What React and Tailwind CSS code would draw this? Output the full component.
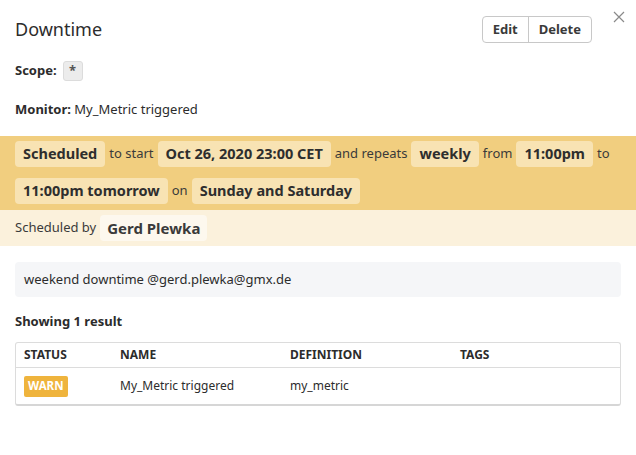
import React from "react";

const font = { fontFamily: '"Noto Sans", "Open Sans", sans-serif' };

function Chip({ children }) {
  return (
    <span className="rounded-[4px] bg-[#f8e3b3] px-[8px] h-[26px] flex items-center text-[14.5px] font-bold text-[#2e2e2e]">
      {children}
    </span>
  );
}

function Word({ children }) {
  return <span className="text-[13px] text-[#3a3a3a]">{children}</span>;
}

export default function App() {
  return (
    <div className="relative w-[636px] h-[455px] bg-white text-[#333]" style={font}>
      <button className="absolute right-[11px] top-[11px] text-[#8a8a8a]">
        <svg width="12" height="12" viewBox="0 0 12 12" fill="none" stroke="currentColor" strokeWidth="1.2">
          <path d="M1 1l10 10M11 1L1 11" />
        </svg>
      </button>

      <div className="px-[15px] pt-[16px] flex items-center justify-between pr-[44px]">
        <h1 className="text-[18px] leading-[27px] text-[#2c2c2c]">Downtime</h1>
        <div className="flex h-[27px] border border-[#c8c8c8] rounded-[4px] text-[13px] font-bold text-[#3a3a3a]">
          <button className="px-[10px] border-r border-[#c8c8c8]">Edit</button>
          <button className="px-[10px]">Delete</button>
        </div>
      </div>

      <div className="px-[15px] mt-[18px] flex items-center gap-[6px] h-[20px] text-[13px]">
        <span className="font-bold text-[#2c2c2c]">Scope:</span>
        <span className="h-[20px] w-[20px] flex items-center justify-center rounded-[3px] border border-[#dcdcdc] bg-[#ececec] font-bold text-[#555]">*</span>
      </div>

      <div className="px-[15px] mt-[18px] text-[13px] leading-[20px] text-[#2c2c2c]">
        <span className="font-bold">Monitor:</span> My_Metric triggered
      </div>

      <div className="mt-[17px] bg-[#f1ce7f] pl-[15px] pr-[15px] pt-[5px] pb-[6px] flex flex-wrap items-center gap-x-[4px] gap-y-[11px]">
        <Chip>Scheduled</Chip>
        <Word>to start</Word>
        <Chip>Oct 26, 2020 23:00 CET</Chip>
        <Word>and repeats</Word>
        <Chip>weekly</Chip>
        <Word>from</Word>
        <Chip>11:00pm</Chip>
        <Word>to</Word>
        <Chip>11:00pm tomorrow</Chip>
        <Word>on</Word>
        <Chip>Sunday and Saturday</Chip>
      </div>

      <div className="bg-[#fbf1dc] px-[15px] h-[36px] flex items-center gap-[4px]">
        <span className="text-[13px] text-[#3a3a3a]">Scheduled by</span>
        <span className="rounded-[4px] bg-[#fdf8ee] px-[7px] h-[26px] flex items-center text-[15px] font-bold text-[#3a3a3a]">
          Gerd Plewka
        </span>
      </div>

      <div className="mx-[15px] mt-[16px] h-[35px] rounded-[4px] bg-[#f5f6f8] px-[9px] flex items-center text-[13px] text-[#2c2c2c]">
        weekend downtime @gerd.plewka@gmx.de
      </div>

      <div className="px-[15px] mt-[14px] text-[13px] font-bold leading-[20px] text-[#2c2c2c]">
        Showing 1 result
      </div>

      <div className="mx-[15px] mt-[11px] rounded-[3px] border border-[#dcdcdc] border-b-2 border-b-[#d6d6d6]">
        <div className="grid grid-cols-[96px_170px_170px_1fr] h-[25px] items-center border-b border-[#dcdcdc] text-[12px] font-bold text-[#2c2c2c]">
          <div className="pl-[8px]">STATUS</div>
          <div className="pl-[8px]">NAME</div>
          <div className="pl-[8px]">DEFINITION</div>
          <div className="pl-[8px]">TAGS</div>
        </div>
        <div className="grid grid-cols-[96px_170px_170px_1fr] h-[36px] items-center text-[12px] text-[#2c2c2c]">
          <div className="pl-[8px]">
            <span className="inline-flex items-center h-[21px] px-[4px] rounded-[2px] bg-[#efb43d] text-white font-bold text-[11.5px]">WARN</span>
          </div>
          <div className="pl-[8px]">My_Metric triggered</div>
          <div className="pl-[8px]">my_metric</div>
          <div className="pl-[8px]"></div>
        </div>
      </div>
    </div>
  );
}
